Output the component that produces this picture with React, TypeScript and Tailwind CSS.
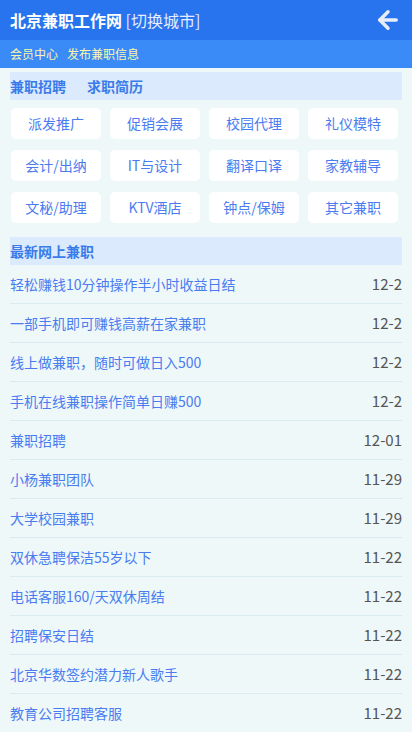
import { ArrowLeft } from "lucide-react";

const categories = [
  "派发推广", "促销会展", "校园代理", "礼仪模特",
  "会计/出纳", "IT与设计", "翻译口译", "家教辅导",
  "文秘/助理", "KTV酒店", "钟点/保姆", "其它兼职",
];

const jobs = [
  { title: "轻松赚钱10分钟操作半小时收益日结", date: "12-2" },
  { title: "一部手机即可赚钱高薪在家兼职", date: "12-2" },
  { title: "线上做兼职，随时可做日入500", date: "12-2" },
  { title: "手机在线兼职操作简单日赚500", date: "12-2" },
  { title: "兼职招聘", date: "12-01" },
  { title: "小杨兼职团队", date: "11-29" },
  { title: "大学校园兼职", date: "11-29" },
  { title: "双休急聘保洁55岁以下", date: "11-22" },
  { title: "电话客服160/天双休周结", date: "11-22" },
  { title: "招聘保安日结", date: "11-22" },
  { title: "北京华数签约潜力新人歌手", date: "11-22" },
  { title: "教育公司招聘客服", date: "11-22" },
];

export default function App() {
  return (
    <div
      className="w-[412px] h-[732px] overflow-hidden bg-[#eef8f9]"
      style={{ fontFamily: '"Noto Sans CJK SC", "Noto Sans", sans-serif' }}
    >
      {/* Header */}
      <header className="h-10 bg-[#2873ee] flex items-center justify-between pl-[10px] pr-[10px]">
        <h1 className="text-[16px] leading-none text-white">
          <span className="font-bold">北京兼职工作网</span>{" "}
          <span className="text-[#e4ecff]">[切换城市]</span>
        </h1>
        <ArrowLeft className="w-7 h-7 text-[#e8eef8]" strokeWidth={3} />
      </header>

      {/* Sub nav */}
      <div className="h-7 bg-[#3a8bf8] flex items-center gap-[9px] px-[10px] text-[12px] text-[#fdf6a8]">
        <span>会员中心</span>
        <span>发布兼职信息</span>
      </div>

      {/* Tabs */}
      <div className="mx-[10px] mt-[4px] h-[28px] bg-[#dbeafc] flex items-center gap-[21px] text-[14px] font-bold text-[#3a7bea]">
        <span>兼职招聘</span>
        <span>求职简历</span>
      </div>

      {/* Categories */}
      <div className="ml-[11px] w-[387px] mt-[8px] grid grid-cols-4 gap-x-[9px] gap-y-[11px]">
        {categories.map((c) => (
          <div
            key={c}
            className="h-[31px] bg-white rounded-[5px] flex items-center justify-center text-[14px] text-[#4a7cf0]"
          >
            {c}
          </div>
        ))}
      </div>

      {/* Latest */}
      <div className="mx-[10px] mt-[14px] h-[28px] bg-[#dbeafc] flex items-center text-[14px] font-bold text-[#3a7bea]">
        最新网上兼职
      </div>

      <ul className="mx-[10px]">
        {jobs.map((j) => (
          <li
            key={j.title}
            className="h-[39px] border-b border-[#d8ebee] flex items-center justify-between"
          >
            <span className="text-[14px] text-[#4a7cf0]">{j.title}</span>
            <span className="text-[15px] text-[#555]">{j.date}</span>
          </li>
        ))}
      </ul>
    </div>
  );
}
